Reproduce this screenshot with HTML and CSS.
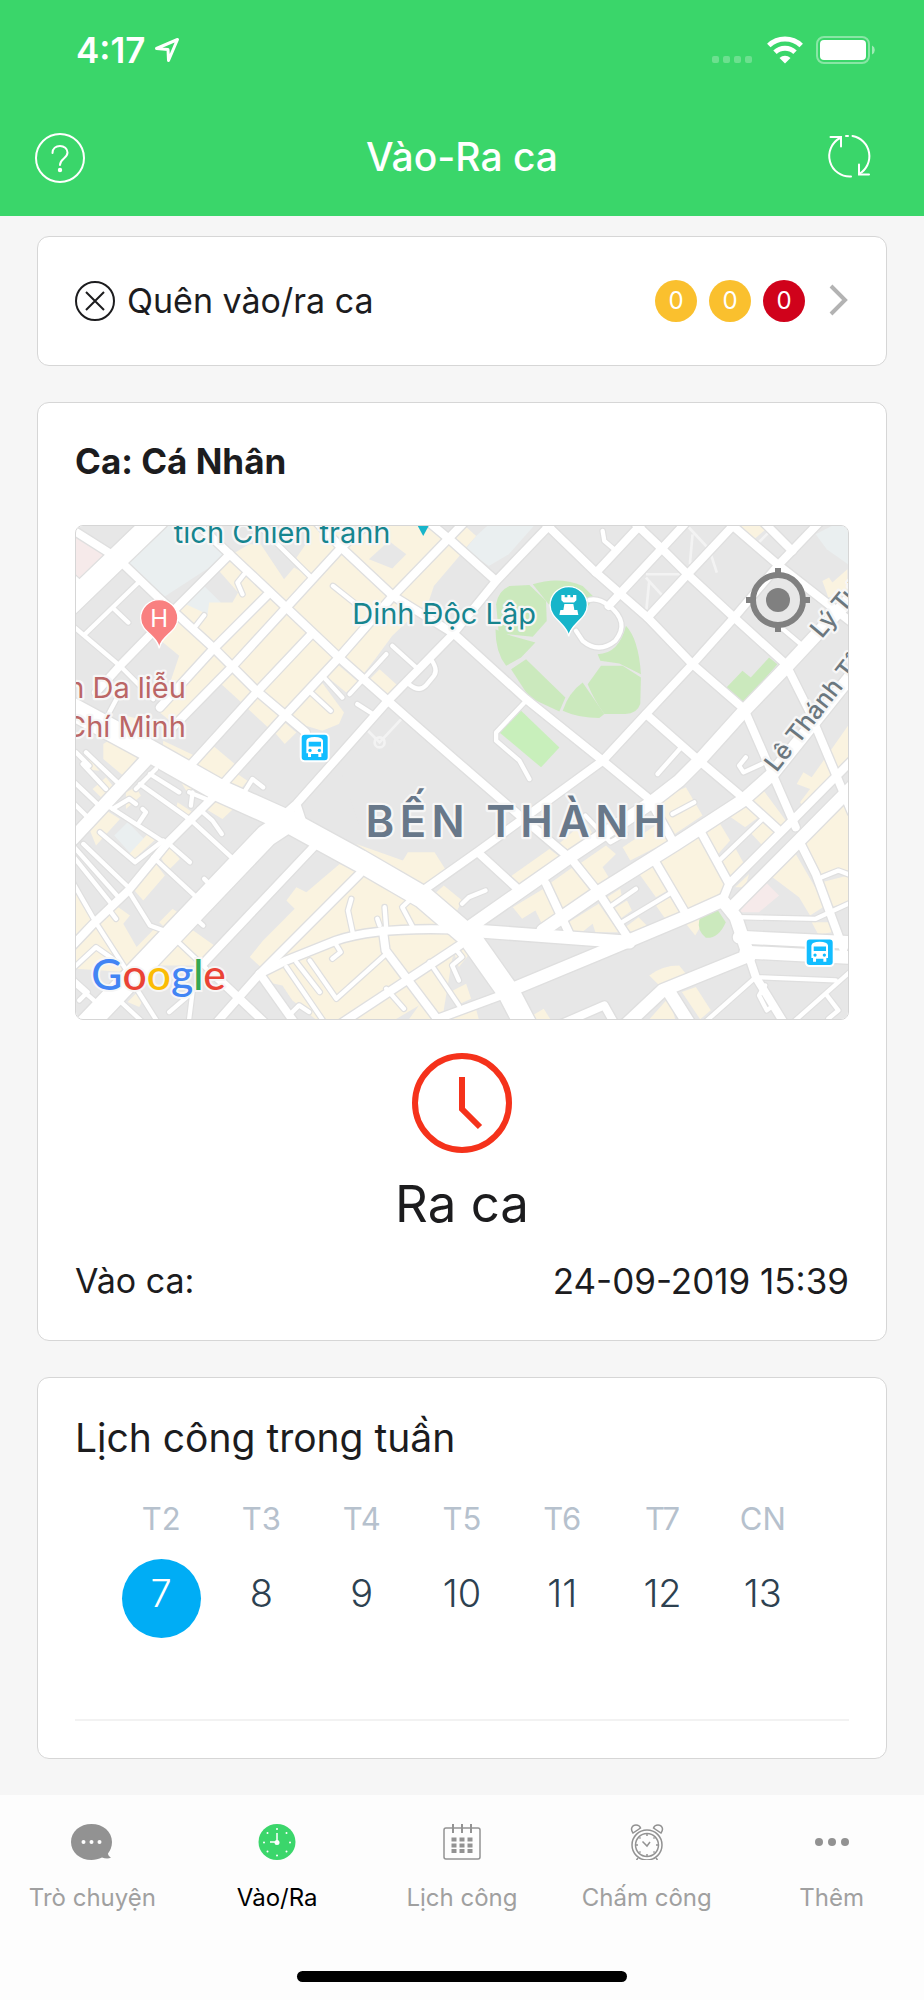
FILE: index.html
```html
<!DOCTYPE html>
<html lang="vi">
<head>
    <meta charset="UTF-8">
    <meta name="viewport" content="width=device-width, initial-scale=1.0">
    <title>Vào-Ra ca</title>
    <link rel="stylesheet" href="styles.css">
</head>
<body>

<header class="header">
    <div class="status-bar">
        <div class="status-left">
            <span class="time">4:17</span>
            <svg width="26" height="26" viewBox="0 0 26 26" fill="none" stroke="#fff" stroke-width="3" stroke-linejoin="round">
                <path d="M2.500 11.500L23.500 2.500L14.500 23.500L14 12.500Z"/>
            </svg>
        </div>
        <div class="status-right">
            <svg width="42" height="28" viewBox="0 0 42 28" fill="#fff" opacity=".25">
                <rect x="0" y="20" width="7" height="7" rx="2"/>
                <rect x="11" y="20" width="7" height="7" rx="2"/>
                <rect x="22" y="20" width="7" height="7" rx="2"/>
                <rect x="33" y="20" width="7" height="7" rx="2"/>
            </svg>
            <svg width="36" height="28" viewBox="0 0 36 28" fill="none" stroke="#fff">
                <path d="M1.800 9.500a23.500 23.500 0 0 1 32.400 0" stroke-width="5"/>
                <path d="M8 16.200a14.500 14.500 0 0 1 20 0" stroke-width="5"/>
                <path d="M18 27.500l-5.500-5.500a8 8 0 0 1 11 0z" fill="#fff" stroke="none"/>
            </svg>
            <svg width="60" height="28" viewBox="0 0 60 28">
                <rect x="1" y="1" width="52" height="26" rx="7" fill="none" stroke="#fff" stroke-width="2" opacity=".4"/>
                <rect x="4" y="4" width="46" height="20" rx="4" fill="#fff"/>
                <path d="M56 9.500a5 5 0 0 1 0 9z" fill="#fff" opacity=".5"/>
            </svg>
        </div>
    </div>

    <nav class="nav-bar">
        <button class="icon-button" aria-label="Trợ giúp">
            <svg width="50" height="50" viewBox="0 0 50 50" fill="none" stroke="#fff" stroke-width="2">
                <circle cx="25" cy="25" r="24"/>
                <path d="M17.500 20c0-4.500 3.500-7 7.500-7s7.500 2.500 7.500 6.500c0 6-7.500 6-7.500 12.500" stroke-linecap="round"/>
                <circle cx="25" cy="37" r="1.200" fill="#fff"/>
            </svg>
        </button>
        <h1>Vào-Ra ca</h1>
        <button class="icon-button" aria-label="Tải lại">
            <svg width="80" height="50" viewBox="0 0 80 50" fill="none" stroke="#fff" stroke-width="2" stroke-linecap="round">
                <path d="M42 43.500A20.500 20.500 0 0 1 31 5"/>
                <path d="M21.500 4H32V13.500"/>
                <path d="M43.500 3A20.500 20.500 0 0 1 50 41"/>
                <path d="M50 31.500V41.500H60"/>
                <path d="M37 3h2"/>
            </svg>
        </button>
    </nav>
</header>

<main class="content">

    <a href="#" class="card missed">
        <svg width="40" height="40" viewBox="0 0 40 40" fill="none" stroke="#1c1c1e" stroke-width="2">
            <circle cx="20" cy="20" r="19"/>
            <path d="M11 11l18 18M29 11L11 29"/>
        </svg>
        <span class="missed-text">Quên vào/ra ca</span>
        <span class="badge badge-yellow">0</span>
        <span class="badge badge-yellow">0</span>
        <span class="badge badge-red">0</span>
        <svg class="chevron" width="20" height="34" viewBox="0 0 20 34" fill="none" stroke="#b3b3b3" stroke-width="4">
            <path d="M2 2l14 14L2 30"/>
        </svg>
    </a>

    <section class="card shift">
        <h2>Ca: Cá Nhân</h2>

        <div class="map">
            <svg class="map-image" viewBox="0 0 2319 1482">
                <defs>
                    <g id="major">
                        <path d="M-20 545L202 665L432 795L632 885L852 1005L1042 1115L1182 1235L1302 1405L1362 1520"/>
                        <path d="M640 885L572 930L362 1150L20 1510"/>
                        <path d="M-20 235L245-20"/>
                    </g>
                    <g id="wide">
                        <path d="M2352 190L2137 420L2007 555L1872 705L1812 765L1722 835L1482 995L1182 1205"/>
                        <path d="M2352 420L2092 745L2002 825L1802 955L1562 1105L1402 1215"/>
                        <path d="M232 680L-10 940"/>
                        <path d="M1182 1215L1662 1250"/>
                        <path d="M1302 1395L1592 1275L1842 1170L1942 1125L1982 1175L2022 1295"/>
                        <path d="M1972 1145L2172 945L2340 775"/>
                        <path d="M1992 1235L2340 1252M2012 1280L2340 1297"/>
                        <path d="M2022 1290L1762 1395L1650 1500M1782 1400L1845 1500"/>
                    </g>
                    <g id="street">
                        <path d="M-20 5L122 95L242 210L417 370L542 495L690 620"/>
                        <path d="M350-20L462 85L632 245L790 395L937 525L1022 600L1142 705L1327 865L1492 1005L1572 1105L1657 1235"/>
                        <path d="M725-10L797 65L952 210L1137 325L1352 520L1582 705L1722 820L1792 945"/>
                        <path d="M1050-20L1122 40L1262 165"/>
                        <path d="M462 85L302 245L132 420L60 500"/>
                        <path d="M880-10L797 65L632 245L467 425L290 605"/>
                        <path d="M572 210L412 370L252 545"/>
                        <path d="M707 325L542 500L347 715"/>
                        <path d="M1165-10L952 210L790 395L627 570L442 775"/>
                        <path d="M1430-10L1262 165L1132 325L937 525L662 835L600 890M662 835L680 890"/>
                        <path d="M1702-10L1562 140M1832-10L1632 205L1600 240M1982-10L1837 145L1717 275"/>
                        <path d="M2232-10L2112 115L1977 275L1852 415L1712 565L1582 705L1212 975L1042 1095"/>
                        <path d="M1407-10L1562 140L1717 275L1852 415L2007 550L2092 745L2162 905"/>
                        <path d="M1677-10L1762 70L1837 145L1977 275L2132 415L2202 555L2282 745L2330 860"/>
                        <path d="M1962-10L2107 115L2330 290M2067-10L2152 75"/>
                        <path d="M1712 565L1872 705L2002 815L2107 910"/>
                        <path d="M1962 1075L2142 895L2330 705M1942 1125L1962 1075L1880 925"/>
                        <path d="M2172 945L2222 1045L2305 1270M1732 995L1832 1165M1212 985L1332 1095"/>
                        <path d="M722 955L382 1315M852 1045L552 1345L422 1492"/>
                        <path d="M422 805L272 955L157 1095L52 1195L-10 1260"/>
                        <path d="M552 1345L655 1490M922 1215L930 1275L1092 1490M800 1492L1152 1260"/>
                        <path d="M552 1345L632 1305L782 1245Q900 1205 1132 1212"/>
                        <path d="M412 1345L565 1490M1082 1482L1290 1405M1412 1075L1482 1225"/>
                        <path d="M1460 1495L1587 1440L1615 1490M2022 1295L2042 1355L2125 1490"/>
                    </g>
                    <g id="lane">
                        <path d="M560 10L707 155M192 165L27 325M115 250L157 290M-10 300L132 420L232 520M-10 150L25 182M100 560L132 500"/>
                        <path d="M505 145L485 170L500 205M360 300L385 268M772 180L835 230M932 385L822 505M745 455L800 515M700 495L765 555M845 535L900 570"/>
                        <path d="M950 360L1022 425M1062 395Q1090 430 1075 450L1050 480Q1030 500 1000 475"/>
                        <path d="M1502 315L1522 345Q1570 385 1620 345Q1665 290 1602 240Q1570 215 1542 222"/>
                        <path d="M1352 525L1262 620V645L1332 705L1362 760M1582 15L1587 45L1622 75M1822 660L1747 745M2012 695L1992 720L2005 740L2060 715M2112 300L2177 355"/>
                        <path d="M1602 1145L1682 1090M1632 1195L1782 1105M1932 1005L2062 880M1792 865L1857 830M1530 870L1605 950L1650 925"/>
                        <path d="M1987 1175L2222 1180L2330 1130M2240 1055L2290 1035L2330 1050M2042 1355L2282 1365M2042 1355L1890 1490M2330 1335L2155 1490M2252 1405L2290 1455L2260 1480M2070 1380L2052 1410L2075 1455L2095 1440"/>
                        <path d="M102 845L272 955M347 885L472 1000M232 995L367 1120M157 1095L222 1200L277 1220M-10 1070L62 1195L152 1335"/>
                        <path d="M-10 990L110 1140M-10 960L130 1118M22 955L152 1080M72 920L177 1010L262 945M105 1160L120 1180"/>
                        <path d="M-10 765L80 850M30 680L140 785M-10 830L50 890M20 715L90 790M0 680L40 720M192 775L347 885M222 745L310 800M180 790L240 730"/>
                        <path d="M340 800L390 820M350 800L345 840M370 850L410 885L438 925M302 1245L392 1330M360 1180L382 1200M385 1060L400 1075M285 960L342 1010"/>
                        <path d="M110 850L160 820L180 835M190 890L210 860L200 850M505 800L530 760L562 785"/>
                        <path d="M632 1325L745 1490M662 1310L732 1400M702 1305L782 1420L832 1375L932 1285M1062 1310L1150 1440M932 1390L985 1450"/>
                        <path d="M1012 1205L980 1145L1012 1115M832 1225L817 1155L827 1120M932 1210L927 1145M912 1200L905 1180M780 1255L795 1280L770 1300"/>
                        <path d="M-10 1360L35 1400L10 1425M130 1425L200 1490M185 1395L245 1490M-10 1330L60 1265L110 1300M-10 1370L60 1430M280 1460L350 1400L340 1480M1140 1270L1160 1295L1130 1320L1150 1365M1160 1135L1180 1115L1230 1095M640 1470L670 1440L700 1460"/>
                    </g>
                </defs>

                <rect width="2319" height="1482" fill="#e7e7e7"/>

                <g fill="#eaeff0">
                    <path d="M142 100L240 0H365L462 85L262 215Z"/>
                    <path d="M315 240L385 180L435 230L395 265Z"/>
                    <path d="M1202 30L1235 0H1375L1300 85L1240 120L1170 70Z"/>
                    <path d="M2222 25L2270 0H2319V115L2255 70Z"/>
                    <path d="M115 930L155 890L205 940L165 985Z"/>
                </g>
                <g fill="#f6eaea">
                    <path d="M0 33L97 95L0 180Z"/>
                    <path d="M1992 1160L2072 1070L2112 1110L2052 1160Z"/>
                </g>
                <g fill="#faf3e0">
                    <path d="M477 80L520 55L555 55L625 160L655 125L707 155L632 245Z"/>
                    <path d="M662 95L697 45L690 0H870L797 65L707 160Z"/>
                    <path d="M797 65L872 0H1080L1120 40L952 210Z"/>
                    <path d="M797 65L952 210L790 395L632 245Z"/>
                    <path d="M430 135L467 95L790 395L627 570L417 370L302 250L330 235L395 265L400 230H470L487 200Z"/>
                    <path d="M302 285L417 370L467 425L300 600L252 560L310 390L250 340Z"/>
                    <path d="M952 210L1130 30L1160 80L1075 180L1060 225L950 330L902 395L855 455L790 395Z"/>
                    <path d="M745 445L785 415L850 470L812 500ZM912 430L967 480L937 520L872 470Z"/>
                    <path d="M645 565L735 465L805 560L790 595L740 615L690 600Z"/>
                    <path d="M437 475L467 430L532 495L497 530ZM517 550L545 510L612 565L577 605ZM597 620L627 590L662 620L627 655Z"/>
                    <path d="M262 645L357 690L342 715L260 670ZM362 715L412 660L477 715L442 765ZM82 655L112 635L192 685L142 750L82 700Z"/>
                    <path d="M150 570L230 590L215 620L150 600ZM465 770L485 745L515 765L495 790ZM305 830L350 860L335 880L300 850ZM310 760L355 780L340 810Z"/>
                    <path d="M20 730L40 700L70 735ZM50 790L90 755L110 780L75 815ZM150 800L180 785L195 810L150 850Z"/>
                    <path d="M390 850L422 810L472 850L440 880ZM42 915L92 855L132 880L60 960Z"/>
                    <path d="M167 1085L232 1005L267 1050L202 1125ZM252 990L280 965L312 1000L277 1035ZM160 985L215 925L240 940L175 1000Z"/>
                    <path d="M0 1100L62 1190L120 1140L162 1170L142 1195L182 1265L240 1205L272 1220L150 1340L0 1330ZM250 1190L290 1150L312 1165L270 1210Z"/>
                    <path d="M310 1240L352 1215L422 1265L372 1320H250ZM155 1430L185 1400L205 1415L190 1445Z"/>
                    <path d="M522 1295L562 1245L657 1150L632 1125L662 1085L692 1100L792 1015L852 1040L572 1340Z"/>
                    <path d="M862 1050L1122 1185L1150 1260L1130 1300L1100 1482H720L552 1345Z"/>
                    <path d="M842 955L982 1005L997 980H1077L1112 1035L1042 1090ZM1105 1080L1160 1125L1140 1165L1060 1120Z"/>
                    <path d="M1302 1055L1422 970L1462 1000L1330 1090ZM1512 1015L1592 960L1622 985L1582 1025L1600 1055L1562 1090Z"/>
                    <path d="M1450 955L1530 885L1560 940L1500 985ZM1642 965L1770 880L1792 940L1665 1005Z"/>
                    <path d="M1742 825L1832 785L1882 870L1792 930ZM1747 1005L1872 935L1957 1070L1930 1110L1832 1155Z"/>
                    <path d="M1692 1045L1732 1015L1777 1095L1742 1115ZM1422 1075L1492 1025L1560 1105L1452 1150Z"/>
                    <path d="M1312 1145L1412 1085L1452 1165L1402 1200L1380 1155L1340 1180ZM1480 1190L1570 1135L1630 1220H1560L1552 1195L1520 1220H1490Z"/>
                    <path d="M1595 1115L1635 1090L1640 1115L1600 1140ZM1615 1150L1655 1125L1670 1155L1635 1180ZM1650 1205L1690 1175L1715 1200L1670 1220Z"/>
                    <path d="M1742 1140L1785 1115L1812 1160L1770 1180ZM1832 1195L1900 1165L1860 1230Z"/>
                    <path d="M1890 925L1935 895L1965 945L1925 990ZM1967 875L2012 845L2050 875L2010 905ZM1932 1005L1982 970L2007 1015L1970 1055Z"/>
                    <path d="M2022 815L2062 790L2132 885L2107 915ZM2025 920L2062 880L2100 915L2062 960ZM1980 1085L2022 1045L2010 1085Z"/>
                    <path d="M2182 945L2319 805V1035L2232 1055ZM2092 1055L2162 985L2252 1140L2205 1170L2172 1115Z"/>
                    <path d="M2240 1070L2319 1050V1130L2265 1145ZM2210 1190H2265L2270 1220L2230 1228Z"/>
                    <path d="M2165 775L2185 740L2210 755L2319 600V720L2190 850L2175 830L2205 790Z"/>
                    <path d="M1722 1350Q1760 1320 1812 1320L1832 1345L1757 1385ZM1820 1400L1862 1385L1907 1455L1875 1482ZM1722 1482L1782 1415L1800 1482Z"/>
                    <path d="M1132 1270L1190 1275L1150 1325ZM1132 1395L1172 1375L1187 1420L1142 1440ZM1122 1460L1200 1445L1210 1482H1122ZM1372 1470L1405 1450L1425 1482H1380Z"/>
                    <path d="M1998 0H2060L2072 10L2037 40ZM2242 165L2262 155L2272 170L2317 130V200L2260 215Z"/>
                    <path d="M1137 30L1172 3L1202 30L1167 70ZM1122 45L1152 85L1122 120Z"/>
                </g>
                <g fill="#e7e7e7">
                    <path d="M880 100L940 45L992 85L950 128Z"/>
                    <path d="M572 1370L620 1380L650 1425L620 1440ZM1030 1440L1000 1482H960Z"/>
                    <path d="M800 750L950 650L1100 850L850 900Z"/>
                </g>
                <g fill="#cbe9bd">
                    <path d="M1262 235Q1268 195 1302 180L1362 177L1412 225L1414 285L1372 333L1270 322Z"/>
                    <path d="M1372 175Q1450 150 1522 180L1557 215L1520 265L1420 235Z"/>
                    <path d="M1260 310L1307 330L1380 350L1337 395L1292 420Q1260 380 1260 310Z"/>
                    <path d="M1307 430L1352 400L1470 515L1452 557L1362 515Z"/>
                    <path d="M1462 555Q1480 500 1522 470L1587 565L1572 577Q1510 577 1462 555Z"/>
                    <path d="M1537 475L1577 420H1642L1697 455L1695 535Q1685 565 1650 565L1587 565Q1555 520 1537 475Z"/>
                    <path d="M1567 385Q1630 385 1652 300Q1690 340 1697 445L1632 413L1575 405Z"/>
                    <path d="M1954 485L2002 435L2027 455L2082 395L2107 415L2007 530Z"/>
                    <path d="M1872 1185Q1880 1145 1922 1145L1952 1190Q1930 1240 1892 1237Q1865 1215 1872 1185Z"/>
                    <path d="M1272 620L1337 555L1452 665L1397 725Z" fill="#c8efbb"/>
                </g>

                <g fill="none" stroke="#f3f3f3" stroke-width="8">
                    <path d="M877 615L912 650L982 575"/>
                    <circle cx="912" cy="650" r="15"/>
                    <path d="M1837 0L1902 70L1925 140M1852 25L1844 115M1712 145H1832M1712 155L1762 210M1722 165L1712 265M2090 10L2040 60"/>
                </g>

                <g class="casing">
                    <use href="#lane" stroke-width="20"/>
                    <use href="#street" stroke-width="32"/>
                    <use href="#wide" stroke-width="46"/>
                    <use href="#major" stroke-width="74"/>
                </g>
                <g class="road">
                    <use href="#lane" stroke-width="13"/>
                    <use href="#street" stroke-width="24"/>
                    <use href="#wide" stroke-width="38"/>
                    <use href="#major" stroke-width="66"/>
                </g>

                <!-- places -->
                <g class="place">
                    <text x="294" y="52" class="place-teal">tích Chiến tranh</text>
                    <text x="830" y="295" class="place-teal">Dinh Độc Lập</text>
                    <text x="330" y="518" class="place-red">n Da liễu</text>
                    <text x="330" y="633" class="place-red">Chí Minh</text>
                    <text x="0" y="0" class="place-road" transform="translate(2240 340) rotate(-50)">Lý Tự Trọng</text>
                    <text x="0" y="0" class="place-road" transform="translate(2104 742) rotate(-52)">Lê Thánh Tôn</text>
                    <text x="870" y="935" class="place-district">BẾN THÀNH</text>
                </g>

                <!-- pins -->
                <path d="M1024-5H1062L1043 30Z" fill="#17b5ca"/>
                <path d="M250 368C246 330 194 318 194 277A56 56 0 0 1 306 277C306 318 254 330 250 368Z" fill="#f98080" stroke="#fff" stroke-width="4"/>
                <text x="250" y="303" class="pin-letter">H</text>
                <path d="M1480 332C1476 294 1424 280 1424 238A56 56 0 0 1 1536 238C1536 280 1484 294 1480 332Z" fill="#17b5ca" stroke="#fff" stroke-width="4"/>
                <path d="M1458 207h10v7h8v-7h9v7h8v-7h10v16l-7 7h-31l-7-7zM1467 234h27l3 18h9l3 15h-57l3-15h9z" fill="#fff"/>

                <g id="bus">
                    <rect x="675" y="624" width="84" height="83" rx="12" fill="#12bdff" stroke="#fff" stroke-width="6"/>
                    <path d="M692 645Q694 634 717 634Q740 634 742 645V683H737V694H728V685H706V694H697V683H692Z" fill="#fff"/>
                    <path d="M699 648H736V662H699Z" fill="#12bdff"/>
                    <circle cx="703" cy="674" r="5" fill="#12bdff"/>
                    <circle cx="731" cy="674" r="5" fill="#12bdff"/>
                </g>
                <use href="#bus" x="1517" y="615"/>

                <text x="46" y="1393" class="google"><tspan fill="#4285f4">G</tspan><tspan fill="#ea4335">o</tspan><tspan fill="#fbbc05">o</tspan><tspan fill="#4285f4">g</tspan><tspan fill="#34a853">l</tspan><tspan fill="#ea4335">e</tspan></text>
            </svg>

            <button class="locate" aria-label="Vị trí của tôi">
                <svg width="66" height="66" viewBox="0 0 66 66" fill="none" stroke="#808080" stroke-width="6">
                    <circle cx="33" cy="33" r="25"/>
                    <circle cx="33" cy="33" r="12" fill="#808080" stroke="none"/>
                    <path d="M33 1v8M33 57v8M1 33h8M57 33h8"/>
                </svg>
            </button>
        </div>

        <button class="check-out">
            <svg width="102" height="102" viewBox="0 0 102 102" fill="none" stroke="#f5321b" stroke-width="6">
                <circle cx="51" cy="51" r="47"/>
                <path d="M51 25V57L69 75"/>
            </svg>
            Ra ca
        </button>

        <div class="shift-row">
            <span>Vào ca:</span>
            <span class="shift-time">24-09-2019 15:39</span>
        </div>
    </section>

    <section class="card week">
        <h2>Lịch công trong tuần</h2>
        <table class="week-table">
            <thead>
                <tr>
                    <th>T2</th>
                    <th>T3</th>
                    <th>T4</th>
                    <th>T5</th>
                    <th>T6</th>
                    <th>T7</th>
                    <th>CN</th>
                </tr>
            </thead>
            <tbody>
                <tr>
                    <td><button class="day selected">7</button></td>
                    <td><button class="day">8</button></td>
                    <td><button class="day">9</button></td>
                    <td><button class="day">10</button></td>
                    <td><button class="day">11</button></td>
                    <td><button class="day">12</button></td>
                    <td><button class="day">13</button></td>
                </tr>
            </tbody>
        </table>
    </section>

</main>

<footer class="footer">
    <nav class="tabs">
        <a href="#" class="tab">
            <svg width="42" height="36" viewBox="0 0 42 36">
                <path d="M20.500 0C32 0 41 7.500 41 18c0 5-2 9-4 11.500 0 2 1.500 3 3 4-2.500 1.500-6 1-9 0C28 35 24 36 20.500 36 9 36 0 28.500 0 18S9 0 20.500 0z" fill="#929292"/>
                <circle cx="12.500" cy="18" r="2" fill="#fff"/>
                <circle cx="20.500" cy="18" r="2" fill="#fff"/>
                <circle cx="28.500" cy="18" r="2" fill="#fff"/>
            </svg>
            Trò chuyện
        </a>
        <a href="#" class="tab active">
            <svg width="38" height="36" viewBox="0 0 38 36">
                <ellipse cx="19" cy="18" rx="18.500" ry="18" fill="#3bd66b"/>
                <path d="M19 9v9h-7" fill="none" stroke="#fff" stroke-width="1.500"/>
                <circle cx="19" cy="18.500" r="2.500" fill="#fff"/>
                <path d="M19 5v.01M19 31.500v.01M6 18.500v.01M32 18.500v.01M9.500 9v.01M28.500 9v.01M9.500 27.500v.01M28.500 27.500v.01" stroke="#fff" stroke-width="2" stroke-linecap="round"/>
            </svg>
            Vào/Ra
        </a>
        <a href="#" class="tab">
            <svg width="38" height="36" viewBox="0 0 38 36" fill="none" stroke="#929292" stroke-width="1.500">
                <rect x="1" y="4" width="36" height="31" rx="2"/>
                <path d="M10 0v9M19 0v9M28 0v9" stroke-width="2"/>
                <path d="M8.500 15.500h21M8.500 21.500h21M8.500 27h21" stroke-width="4" stroke-dasharray="5 3"/>
            </svg>
            Lịch công
        </a>
        <a href="#" class="tab">
            <svg width="36" height="36" viewBox="0 0 36 36" fill="none" stroke="#929292" stroke-width="1.500">
                <circle cx="18" cy="21" r="15"/>
                <circle cx="18" cy="21" r="11.500"/>
                <path d="M4 9C1 5 3 1 7 1c3 0 4 1.500 4.500 3zM32 9c3-4 1-8-3-8-3 0-4 1.500-4.500 3zM9 34l-1.500 2M27 34l1.500 2"/>
                <path d="M13.500 17.500l4.500 4.500 3-4M18 10v2M18 30v2M7 21h2M27 21h2M10.500 13.500l1 1M25.500 13.500l-1 1M10.500 28.500l1-1M25.500 28.500l-1-1"/>
            </svg>
            Chấm công
        </a>
        <a href="#" class="tab">
            <svg width="36" height="36" viewBox="0 0 36 36" fill="#929292">
                <circle cx="5" cy="18" r="4"/>
                <circle cx="18" cy="18" r="4"/>
                <circle cx="31" cy="18" r="4"/>
            </svg>
            Thêm
        </a>
    </nav>
    <div class="home-indicator"></div>
</footer>

</body>
</html>
```
FILE: styles.css
```css
* {
    margin: 0;
    padding: 0;
    box-sizing: border-box;
}
body {
    display: flex;
    flex-direction: column;
    min-height: 100vh;
    background: #f6f6f6;
    color: #1c1c1e;
    font-family: Inter, "Liberation Sans", sans-serif;
    font-size: 34px;
    line-height: 44px;
}
button {
    background: none;
    border: none;
    color: inherit;
    font-family: inherit;
    cursor: pointer;
}
a {
    color: inherit;
    text-decoration: none;
}
svg {
    display: block;
    flex: none;
}

/* Header */
.header {
    background: #3ad66a;
    color: #fff;
}
.status-bar {
    display: flex;
    justify-content: space-between;
    align-items: center;
    height: 100px;
    padding: 0 48px 0 76px;
}
.status-left {
    display: flex;
    align-items: center;
    gap: 9px;
}
.time {
    font-size: 35px;
    font-weight: 600;
}
.status-right {
    display: flex;
    align-items: center;
    gap: 13px;
}
.nav-bar {
    display: flex;
    align-items: center;
    height: 116px;
    padding: 0 35px;
}
.nav-bar h1 {
    flex: 1;
    font-size: 39px;
    font-weight: 500;
    text-align: center;
    margin-left: 30px;
    padding-bottom: 2px;
}

/* Cards */
.content {
    flex: 1;
    display: flex;
    flex-direction: column;
    gap: 36px;
    padding: 20px 37px 36px;
}
.card {
    background: #fff;
    border: 1px solid #d6d6d6;
    border-radius: 12px;
    padding: 36px 37px 37px;
}
.missed {
    display: flex;
    align-items: center;
    gap: 12px;
    height: 130px;
}
.missed-text {
    flex: 1;
}
.badge {
    width: 42px;
    height: 42px;
    border-radius: 50%;
    color: #fff;
    font-size: 24px;
    line-height: 42px;
    text-align: center;
}
.badge-yellow {
    background: #fac02e;
}
.badge-red {
    background: #d0021b;
}
.chevron {
    margin-left: 12px;
}

/* Shift */
.shift h2 {
    font-size: 35px;
    font-weight: 700;
    margin-bottom: 42px;
}
.map {
    position: relative;
    border: 1px solid #d6d6d6;
    border-radius: 8px;
    overflow: hidden;
}
.map-image {
    width: 100%;
    height: auto;
}
.casing,
.road {
    fill: none;
    stroke: #dfdfdf;
    stroke-linejoin: round;
    stroke-linecap: round;
}
.road {
    stroke: #fff;
}
.place text {
    font-size: 87px;
    stroke: #f6f6f6;
    stroke-width: 14px;
    stroke-linejoin: round;
    paint-order: stroke;
}
.place .place-teal {
    fill: #16858f;
}
.place .place-red {
    fill: #bb6666;
    text-anchor: end;
}
.place .place-road {
    fill: #6b777e;
    font-size: 74px;
    font-weight: 500;
}
.place .place-district {
    fill: #68788a;
    font-size: 131px;
    font-weight: 600;
    letter-spacing: 16px;
}
.pin-letter {
    fill: #fff;
    font-size: 72px;
    text-anchor: middle;
}
.google {
    font-family: Lato, sans-serif;
    font-size: 128px;
    font-weight: 500;
    stroke: #f6f6f6;
    stroke-width: 12px;
    paint-order: stroke;
}
.locate {
    position: absolute;
    top: 41px;
    right: 37px;
}
.check-out {
    display: flex;
    flex-direction: column;
    align-items: center;
    gap: 20px;
    width: 100%;
    padding: 32px 0 25px;
    font-size: 51px;
    line-height: 60px;
}
.shift-row {
    display: flex;
    justify-content: space-between;
}
.shift-time {
    font-size: 35px;
}

/* Week */
.week h2 {
    font-size: 39px;
    font-weight: 400;
    line-height: 48px;
    margin-bottom: 37px;
}
.week-table {
    width: 100%;
    padding: 0 36px 81px;
    border-bottom: 2px solid #f2f2f2;
    border-spacing: 0;
    table-layout: fixed;
}
.week-table th {
    color: #b6c1cd;
    font-size: 31px;
    font-weight: 400;
    line-height: 40px;
    padding-bottom: 20px;
}
.day {
    display: block;
    width: 79px;
    height: 79px;
    margin: 0 auto;
    padding-bottom: 12px;
    border-radius: 50%;
    color: #2d4150;
    font-size: 38px;
    font-weight: 300;
}
.day.selected {
    background: #00adf5;
    color: #fff;
}

/* Tabs */
.footer {
    background: #fdfdfd;
    padding: 29px 0 18px;
}
.tabs {
    display: grid;
    grid-template-columns: repeat(5, 1fr);
    margin-bottom: 57px;
}
.tab {
    display: flex;
    flex-direction: column;
    align-items: center;
    gap: 21px;
    color: #a0a0a0;
    font-size: 24px;
    line-height: 33px;
}
.tab.active {
    color: #000;
}
.home-indicator {
    width: 330px;
    height: 11px;
    margin: 0 auto;
    border-radius: 6px;
    background: #000;
}
```
